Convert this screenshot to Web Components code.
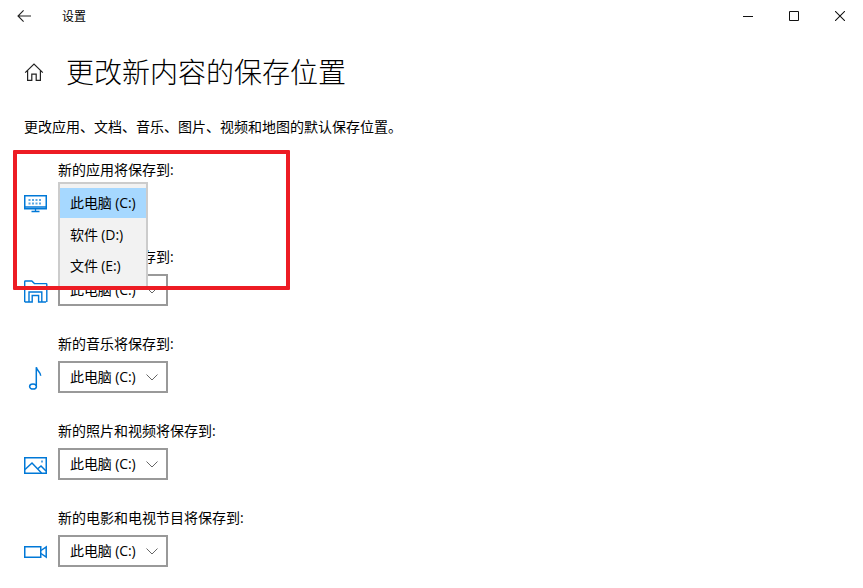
<!DOCTYPE html>
<html lang="zh-CN">
<head>
<meta charset="utf-8">
<title>设置</title>
<style>
  html, body { margin: 0; height: 100%; background: #fff; }
  body { font: 14px/20px "Open Sans", "Noto Sans CJK SC", sans-serif; color: #000; overflow: hidden; }
  svg { display: block; overflow: visible; }
</style>
</head>
<body>

<settings-page>
  <win-titlebar title-text="设置"></win-titlebar>
  <page-heading heading="更改新内容的保存位置"></page-heading>
  <page-note>更改应用、文档、音乐、图片、视频和地图的默认保存位置。</page-note>

  <save-row label="新的应用将保存到:">
    <svg slot="icon" width="24" height="24" viewBox="0 0 24 24" fill="none" stroke="#0078d7">
      <rect x="0.75" y="4.75" width="21.5" height="13" stroke-width="1.5"/>
      <path d="M1 16h21M11.5 17.5v3M7.5 20.5h8" stroke-width="1.3"/>
      <path d="M4.5 8h2v2h-2zM8 8h2v2H8zM11.5 8h2v2h-2zM15 8h2v2h-2zM4.5 11.5h2v2h-2zM8 11.5h2v2H8zM11.5 11.5h2v2h-2zM15 11.5h2v2h-2z" fill="#5aa7e4" stroke="none"/>
    </svg>
    <drive-menu>
      <drive-item selected>此电脑 (C:)</drive-item>
      <drive-item>软件 (D:)</drive-item>
      <drive-item>文件 (E:)</drive-item>
    </drive-menu>
  </save-row>

  <save-row label="新的文档将保存到:">
    <svg slot="icon" width="24" height="24" viewBox="0 0 24 24" fill="none" stroke="#0078d7" stroke-width="1.4">
      <path d="M0.7 24V3.7q0-.7.7-.7h6.4l2.6 2.6h11.7q.7 0 .7.7V24"/>
      <path d="M1 9.5h21"/>
      <path d="M5 24V14h12.8v10h-3.2v-6.5H8.2V24zM0.7 24H5M17.8 24h4.3"/>
    </svg>
    <drive-select>此电脑 (C:)</drive-select>
  </save-row>

  <save-row label="新的音乐将保存到:">
    <svg slot="icon" width="24" height="24" viewBox="0 0 24 24" fill="none" stroke="#0078d7" stroke-width="1.5">
      <ellipse cx="9" cy="21.5" rx="3.4" ry="2.6"/>
      <path d="M12.3 21V2.2c.4 3.4 4.3 4.4 4.4 8.5"/>
    </svg>
    <drive-select>此电脑 (C:)</drive-select>
  </save-row>

  <save-row label="新的照片和视频将保存到:">
    <svg slot="icon" width="24" height="24" viewBox="0 0 24 24" fill="none" stroke="#0078d7" stroke-width="1.5">
      <rect x="0.75" y="5.75" width="21.5" height="15.5"/>
      <path d="M1 17.5l7-6.5 9.5 10M13.5 17l3.5-3 5 5"/>
      <rect x="17" y="8.5" width="2" height="2" fill="#5aa7e4" stroke="none"/>
    </svg>
    <drive-select>此电脑 (C:)</drive-select>
  </save-row>

  <save-row label="新的电影和电视节目将保存到:">
    <svg slot="icon" width="24" height="24" viewBox="0 0 24 24" fill="none" stroke="#0078d7" stroke-width="1.5">
      <rect x="0.75" y="7.75" width="16" height="10.5"/>
      <path d="M17 11.5l5.2-3.5v10L17 14.5"/>
    </svg>
    <drive-select>此电脑 (C:)</drive-select>
  </save-row>

  <mark-frame></mark-frame>
</settings-page>

<script>
// small helper, every element here is just a style + markup in an open shadow root
function defineBlock(name, html, setup) {
  const tpl = document.createElement("template");
  tpl.innerHTML = html;
  class Block extends HTMLElement {
    constructor() {
      super();
      this.attachShadow({ mode: "open" }).appendChild(tpl.content.cloneNode(true));
    }
    connectedCallback() {
      if (setup) setup(this, this.shadowRoot);
    }
  }
  customElements.define(name, Block);
}

defineBlock("settings-page", `
  <style>
    :host { display: flex; flex-direction: column; position: relative; height: 588px; overflow: hidden; }
  </style>
  <slot></slot>
`);

defineBlock("win-titlebar", `
  <style>
    :host { display: flex; align-items: center; height: 32px; }
    .back { width: 24px; margin-left: 12px; }
    .name { margin-left: 26px; padding-top: 2px; flex: 1; font-size: 12px; line-height: 32px; }
    .btns { display: flex; }
    .btns span { display: flex; align-items: center; justify-content: center; width: 46px; height: 32px; }
  </style>
  <div class="back">
    <svg style="display:block" width="24" height="16" viewBox="0 0 24 16" fill="none" stroke="#222" stroke-width="1.1">
      <path d="M6 8h13M11.6 2.4L6 8l5.6 5.6"/>
    </svg>
  </div>
  <div class="name"></div>
  <div class="btns">
    <span><svg style="display:block" width="10" height="10" viewBox="0 0 10 10" stroke="#111"><path d="M0 5.5h10"/></svg></span>
    <span><svg style="display:block" width="10" height="10" viewBox="0 0 10 10" fill="none" stroke="#111"><path d="M.5.5h9v9h-9z"/></svg></span>
    <span><svg style="display:block" width="10" height="10" viewBox="0 0 10 10" fill="none" stroke="#111" stroke-width="1.05"><path d="M0 0l10 10M10 0L0 10"/></svg></span>
  </div>
`, (el, root) => {
  root.querySelector(".name").textContent = el.getAttribute("title-text");
});

defineBlock("page-heading", `
  <style>
    :host { display: flex; align-items: center; height: 40px; margin-top: 20px; padding-left: 24px; }
    svg { display: block; flex: none; }
    h1 { margin: 0 0 0 22px; font-size: 28px; line-height: 40px; font-weight: 300; }
  </style>
  <svg width="20" height="20" viewBox="0 0 20 20" fill="none" stroke="#222" stroke-width="1.2">
    <path d="M1.2 10.6L10 2l8.8 8.6M3.6 8.6V18.4h4.2v-6.2h4.4v6.2h4.2V8.6"/>
  </svg>
  <h1></h1>
`, (el, root) => {
  root.querySelector("h1").textContent = el.getAttribute("heading");
});

defineBlock("page-note", `
  <style>
    :host { display: block; margin: 25px 0 0 24px; height: 20px; margin-bottom: 23px; }
  </style>
  <slot></slot>
`);

defineBlock("save-row", `
  <style>
    :host { display: grid; grid-template-columns: 34px auto; justify-content: start; padding-left: 24px; margin-bottom: 28px; flex: none; position: relative; }
    .label { grid-column: 2; height: 20px; margin-bottom: 7px; white-space: nowrap; }
    .icon { grid-column: 1; grid-row: 2; align-self: center; }
    .field { grid-column: 2; grid-row: 2; height: 32px; }
  </style>
  <div class="label"></div>
  <div class="icon"><slot name="icon"></slot></div>
  <div class="field"><slot></slot></div>
`, (el, root) => {
  root.querySelector(".label").textContent = el.getAttribute("label");
});

defineBlock("drive-select", `
  <style>
    :host { display: flex; align-items: center; box-sizing: border-box; width: 110px; height: 32px; border: 2px solid #999; padding-left: 10px; white-space: nowrap; letter-spacing: -0.1px; }
    span { flex: 1; }
    svg { display: block; margin-right: 8px; }
  </style>
  <span><slot></slot></span>
  <svg width="12" height="7" viewBox="0 0 12 7" fill="none" stroke="#666"><path d="M.5.5L6 6 11.5.5"/></svg>
`);

// opened list sits over the field and over the next row's label
defineBlock("drive-menu", `
  <style>
    :host { display: flex; flex-direction: column; gap: 1.5px; position: absolute; z-index: 2; top: 22px; box-sizing: border-box; width: 90px; height: 108px; padding-top: 4px; background: #f2f2f2; border: 2px solid #ccc; letter-spacing: -0.1px; }
  </style>
  <slot></slot>
`);

defineBlock("drive-item", `
  <style>
    :host { display: block; height: 30px; line-height: 30px; padding-left: 10px; white-space: nowrap; }
    :host([selected]) { background: #a6d8ff; }
  </style>
  <slot></slot>
`);

// red annotation drawn on top of the screenshot
defineBlock("mark-frame", `
  <style>
    :host { position: absolute; z-index: 3; left: 13px; top: 150px; width: 277px; height: 140px; box-sizing: border-box; border: 4px solid #ed1c24; border-radius: 1px; pointer-events: none; }
  </style>
`);
</script>
</body>
</html>
